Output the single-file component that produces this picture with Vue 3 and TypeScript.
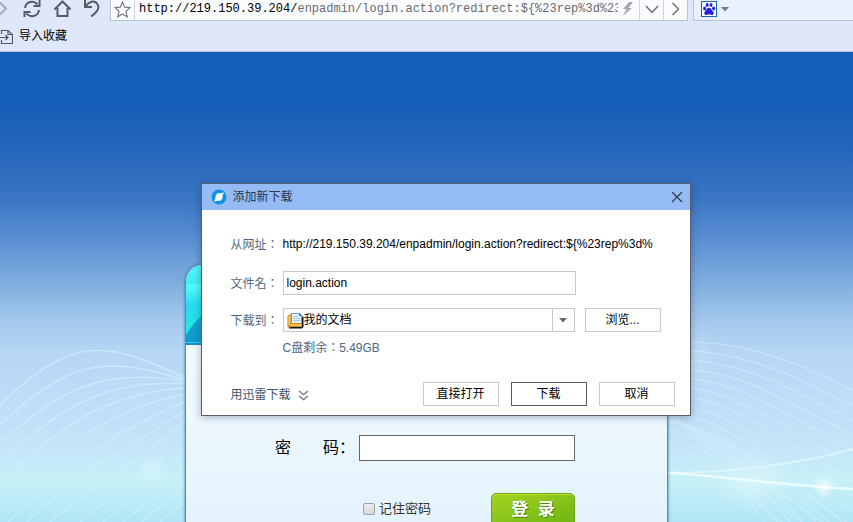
<script setup lang="ts">
import { ref } from 'vue'

const host = 'http://219.150.39.204/'
const path = 'enpadmin/login.action?redirect:${%23rep%3d%23c'
const source = 'http://219.150.39.204/enpadmin/login.action?redirect:${%23rep%3d%'
const fileName = ref('login.action')
const folder = ref('我的文档')
const password = ref('')
const remember = ref(false)

// Each entry: start point, two control points, and the height at the card edge
const leftWaves: number[][] = [
  [0, 405, 75, 332, 108, 342, 378],
  [0, 425, 75, 353, 112, 359, 380],
  [0, 444, 75, 372, 120, 373, 381],
  [0, 465, 72, 391, 120, 383, 383],
  [0, 484, 70, 414, 120, 392, 388],
  [0, 503, 70, 436, 125, 405, 394],
  [8, 522, 75, 456, 130, 425, 401],
  [27, 522, 85, 466, 140, 441, 410],
  [50, 522, 105, 475, 150, 455, 419],
  [80, 522, 125, 486, 158, 465, 432],
  [103, 522, 140, 492, 165, 476, 445],
  [123, 522, 152, 498, 170, 486, 460],
  [142, 522, 162, 504, 174, 496, 478],
  [160, 522, 172, 511, 180, 508, 500],
]
const leftPaths = leftWaves.map(([x, y, ax, ay, bx, by, ey]) => `M${x} ${y}C${ax} ${ay} ${bx} ${by} 186 ${ey}`)
const rightPaths = Array.from({ length: 13 }, (_, i) => {
  const y = 342 + i * 9
  return `M667 ${y}C${730 - i * 2} ${y - 3} ${785 - i * 4} ${y + 13 + i * 3} 853 ${y + 49 + i * 6}`
})
const fanPaths = Array.from({ length: 7 }, (_, i) => {
  return `M667 ${414 + i}C${698 + i * 4} ${430 + i} ${720 + i * 5} ${455 - i * 2} ${764 + i * 13} 522`
})
</script>

<template>
  <div class="page">
    <header class="chrome">
      <div class="toolbar">
        <nav class="nav">
          <button type="button" class="plain" aria-label="前进">
            <svg width="11" height="18" viewBox="0 0 11 18"><path d="M0 2.500L6 8.500L0 14.500" fill="none" stroke="#a3adb8" stroke-width="2" /></svg>
          </button>
          <button type="button" class="plain" aria-label="刷新">
            <svg width="18" height="18" viewBox="0 0 18 18"><g fill="none" stroke="#555b61" stroke-width="2"><path d="M2 8A7 7 0 0 1 14.500 4.500M16 10A7 7 0 0 1 3.500 13.500" /><path d="M16.500 0V6H10.500M1.500 17V12H7.500" /></g></svg>
          </button>
          <button type="button" class="plain" aria-label="主页">
            <svg width="18" height="18" viewBox="0 0 18 18"><path d="M1.500 9.500L9.500 1.500L17.500 9.500M4.500 8V16H14.500V8" fill="none" stroke="#555b61" stroke-width="2" /></svg>
          </button>
          <button type="button" class="plain" aria-label="撤销">
            <svg width="18" height="18" viewBox="0 0 18 18"><path d="M2 0V7H9M2.500 6.500C6 1.500 11 0 14 3.500C17.500 8 14 12 8 16.500" fill="none" stroke="#555b61" stroke-width="2" /></svg>
          </button>
        </nav>
        <div class="address">
          <button type="button" class="plain cell star" aria-label="收藏">
            <svg width="17" height="17" viewBox="0 0 17 17"><path d="M8.500 1L10.700 6.200L16 6.600L12 10.300L13.200 15.800L8.500 12.900L3.800 15.800L5 10.300L1 6.600L6.300 6.200Z" fill="#fff" stroke="#777d84" stroke-width="1.200" /></svg>
          </button>
          <div class="url"><span class="host">{{ host }}</span>{{ path }}</div>
          <svg class="bolt" width="12" height="14" viewBox="0 0 12 14"><path d="M7 0L1 7H4.500L1 14L10 6H6.500L11 0Z" fill="#a4a7aa" /></svg>
          <button type="button" class="plain cell" aria-label="历史">
            <svg width="14" height="9" viewBox="0 0 14 9"><path d="M1 1L7 7.500L13 1" fill="none" stroke="#666c72" stroke-width="1.300" /></svg>
          </button>
          <button type="button" class="plain cell" aria-label="转到">
            <svg width="9" height="14" viewBox="0 0 9 14"><path d="M1.500 1L7.500 7L1.500 13" fill="none" stroke="#666c72" stroke-width="1.400" /></svg>
          </button>
        </div>
        <div class="search">
          <button type="button" class="plain engine" aria-label="搜索引擎">
            <svg width="16" height="16" viewBox="0 0 16 16"><rect x=".5" y=".5" width="15" height="15" fill="#fff" stroke="#1666b4" /><g fill="#2722d8"><ellipse cx="3.600" cy="7.400" rx="1.500" ry="2" /><ellipse cx="6.200" cy="4" rx="1.500" ry="2" /><ellipse cx="10" cy="4" rx="1.500" ry="2" /><ellipse cx="12.600" cy="7.400" rx="1.500" ry="2" /><path d="M8 6.800C10 6.800 10.500 9 12 10.400C13.600 12 12.400 14.200 10.600 13.900C9 13.500 7 13.500 5.500 13.900C3.600 14.200 2.500 12 4 10.400C5.500 9 6 6.800 8 6.800Z" /></g></svg>
            <svg width="8" height="5" viewBox="0 0 8 5"><path d="M0 0H8L4 4.500Z" fill="#737980" /></svg>
          </button>
        </div>
      </div>
      <div class="bookmarks">
        <a href="#import" class="import">
          <svg width="13" height="15" viewBox="0 0 13 15"><path d="M1.500 5V1.500H8L12.500 5.500V14.500H1.500V11M8 1.500V5.500H12.500M0 8.500H8M5.500 6L8 8.500L5.500 11" fill="none" stroke="#4f575f" stroke-width="1.200" /></svg>
          <span>导入收藏</span>
        </a>
      </div>
    </header>

    <main class="stage">
      <svg class="art" viewBox="0 52 853 470" preserveAspectRatio="xMidYMin slice" aria-hidden="true">
        <defs>
          <radialGradient id="glow"><stop offset="0" stop-color="#fff" stop-opacity=".75" /><stop offset="1" stop-color="#fff" stop-opacity="0" /></radialGradient>
          <radialGradient id="haze"><stop offset="0" stop-color="#e2f9f8" stop-opacity=".5" /><stop offset="1" stop-color="#e2f9f8" stop-opacity="0" /></radialGradient>
        </defs>
        <g fill="none" stroke="#cdf1ff" stroke-width="1.400" opacity=".75">
          <path v-for="d in leftPaths" :key="d" :d="d" />
        </g>
        <g fill="none" stroke="#d6f0ff" stroke-width="1.400" opacity=".5">
          <path v-for="d in rightPaths" :key="d" :d="d" />
          <path v-for="d in fanPaths" :key="d" :d="d" />
        </g>
        <ellipse cx="152" cy="469" rx="18" ry="14" fill="url(#haze)" />
        <ellipse cx="695" cy="355" rx="20" ry="38" fill="url(#haze)" opacity=".4" />
        <ellipse cx="750" cy="482" rx="42" ry="30" fill="url(#haze)" />
        <path d="M667 473C730 473 800 464 853 449" fill="none" stroke="#eafcff" stroke-width="2" opacity=".6" />
        <path d="M667 472.500C730 477 790 486 853 489" fill="none" stroke="#f2feff" stroke-width="2.400" opacity=".8" />
        <circle cx="824" cy="487" r="12" fill="url(#glow)" />
      </svg>

      <section class="card">
        <svg class="banner" viewBox="0 0 481 81" preserveAspectRatio="none" aria-hidden="true">
          <defs>
            <linearGradient id="aqua" x1="0" y1="0" x2="0" y2="1"><stop offset="0" stop-color="#55f8fa" /><stop offset=".22" stop-color="#3eeff5" /><stop offset=".26" stop-color="#56fbf8" /><stop offset=".5" stop-color="#25dcf4" /><stop offset=".85" stop-color="#27e6de" /></linearGradient>
            <linearGradient id="deep" x1="0" y1="0" x2="0" y2="1"><stop offset="0" stop-color="#1ab3dd" /><stop offset="1" stop-color="#109acb" /></linearGradient>
          </defs>
          <rect width="481" height="81" fill="url(#aqua)" />
          <path d="M0 71Q7 59 16 51Q120 0 481 20V81H0Z" fill="url(#deep)" />
          <path d="M0 78.500H481" stroke="#2fcff2" />
          <path d="M0 80H481" stroke="#1790cb" stroke-width="2" />
        </svg>
        <form class="login" @submit.prevent>
          <label for="pwd" class="pwd-label">密　　码：</label>
          <input id="pwd" v-model="password" type="password" class="pwd" />
          <div class="actions">
            <label class="remember"><input v-model="remember" type="checkbox" />记住密码</label>
            <button type="submit" class="submit">登&nbsp; 录</button>
          </div>
        </form>
      </section>

      <div class="dialog" role="dialog" aria-labelledby="dlg-title">
        <div class="titlebar">
          <svg width="16" height="16" viewBox="0 0 16 16"><circle cx="8" cy="8" r="7.500" fill="#1092e2" /><path d="M12.800 3.200C12.300 4.500 12.400 5.200 11.600 6.200C12 8.200 11 10.800 9.200 11.800C7.500 12 6 11.300 3.200 12.800C3.800 11.500 3.700 10.800 4.400 9.800C4 7.800 5 5.200 6.800 4.200C8.500 4 10 4.700 12.800 3.200Z" fill="#fff" /></svg>
          <h1 id="dlg-title">添加新下载</h1>
          <button type="button" class="plain" aria-label="关闭">
            <svg width="12" height="12" viewBox="0 0 12 12"><path d="M1 1L11 11M11 1L1 11" fill="none" stroke="#2d3a4c" stroke-width="1.200" /></svg>
          </button>
        </div>
        <form class="fields" @submit.prevent>
          <div class="row first">
            <span class="name">从网址：</span>
            <span class="source">{{ source }}</span>
          </div>
          <div class="row second">
            <label for="file" class="name">文件名：</label>
            <input id="file" v-model="fileName" type="text" class="file" />
          </div>
          <div class="row">
            <label for="folder" class="name">下载到：</label>
            <div class="combo">
              <svg width="17" height="17" viewBox="0 0 17 17">
                <path d="M2 15H15V5L16.500 4V15L15 16.500H2Z" fill="#17130c" />
                <path d="M1 4L4 2.500V15H1Z" fill="#ffd65c" stroke="#b8811f" />
                <path d="M4.500 1.500H12L14.500 4V13H4.500Z" fill="#e5f1ff" stroke="#6e9bd3" />
                <path d="M12 .5L15.500 4H12Z" fill="#1e7fd0" />
                <path d="M6 4.500H11M6 6.500H13M6 8.500H13" stroke="#a7c8ec" />
                <path d="M1.500 14.500L4.500 11.500H14.500V14.500Z" fill="#fbc84e" stroke="#c48b27" />
              </svg>
              <select id="folder" v-model="folder">
                <option>我的文档</option>
              </select>
              <span class="arrow"><svg width="8" height="5" viewBox="0 0 8 5"><path d="M0 0H8L4 4.500Z" fill="#666" /></svg></span>
            </div>
            <button type="button" class="btn">浏览...</button>
          </div>
          <p class="space">C盘剩余：5.49GB</p>
          <div class="footer">
            <button type="button" class="plain xunlei">
              用迅雷下载
              <svg width="11" height="11" viewBox="0 0 11 11"><path d="M1 1L5.500 4.500L10 1M1 6L5.500 9.500L10 6" fill="none" stroke="#7d7d7d" stroke-width="1.400" /></svg>
            </button>
            <div class="buttons">
              <button type="button" class="btn">直接打开</button>
              <button type="submit" class="btn primary">下载</button>
              <button type="button" class="btn">取消</button>
            </div>
          </div>
        </form>
      </div>
    </main>
  </div>
</template>

<style>
body {
  margin: 0;
}
</style>

<style scoped>
.page,
.page * {
  box-sizing: border-box;
}
.page {
  display: flex;
  flex-direction: column;
  height: 100vh;
  overflow: hidden;
  font: 12px/16px "Liberation Sans", "Noto Sans CJK SC", sans-serif;
  color: #000;
}
button,
input,
select {
  font: inherit;
  color: inherit;
  margin: 0;
}
svg {
  display: block;
  flex: none;
}
.plain {
  border: 0;
  padding: 0;
  background: none;
}

.chrome {
  background: #dee8fa;
}
.toolbar {
  display: flex;
  height: 21px;
}
.nav {
  display: flex;
  gap: 12px;
  width: 110px;
  align-items: flex-start;
}
.address {
  display: flex;
  align-items: stretch;
  width: 578px;
  border: 1px solid #b9c5d5;
  border-top: 0;
  background: #fbfcff;
}
.cell {
  display: flex;
  align-items: center;
  justify-content: center;
  width: 24px;
  border-left: 1px solid #d0d5dc;
  padding-bottom: 2px;
}
.star {
  border-left: 0;
  border-right: 1px solid #d0d5dc;
}
.url {
  flex: 1;
  min-width: 0;
  margin: 0 4px;
  overflow: hidden;
  white-space: nowrap;
  font: 12px/18px "Liberation Mono", monospace;
  color: #6b6b6b;
}
.host {
  color: #000;
}
.bolt {
  margin: 2px 5px 0 0;
}
.search {
  flex: 1;
  margin-left: 5px;
  border: solid #b9c5d5;
  border-width: 0 0 1px 1px;
  background: #e9f1fd;
}
.engine {
  display: flex;
  align-items: center;
  gap: 4px;
  padding: 1px 0 0 7px;
}
.bookmarks {
  display: flex;
  align-items: center;
  height: 31px;
  border-bottom: 1px solid #b3c4da;
}
.import {
  display: flex;
  align-items: center;
  gap: 6px;
  color: #000;
  text-decoration: none;
}

.stage {
  position: relative;
  flex: 1;
  min-height: 0;
  overflow: hidden;
  background: linear-gradient(#155fb9 0, #155eb8 50px, #2566bb 98px, #3b76c4 148px, #6396d6 198px, #8ab7e1 244px, #a4c8ee 268px, #b6d6f4 300px, #bfddf7 348px, #c4e4f9 392px, #c7f0f7 428px, #b0e6f6 470px);
}
.art {
  position: absolute;
  inset: 0;
  width: 100%;
  height: 100%;
}
.card {
  position: relative;
  width: 483px;
  min-height: 100%;
  margin: 212px auto 0;
  border: 1px solid #5a8fb0;
  border-radius: 18px 18px 0 0;
  overflow: hidden;
  background: linear-gradient(#f4fbff 80px, #e4f3fd 250px);
  box-shadow: 0 0 3px #2c6f9c;
}
.banner {
  width: 100%;
  height: 80px;
}
.login {
  display: grid;
  grid-template-columns: 84px 216px;
  row-gap: 32px;
  padding: 90px 0 0 89px;
}
.pwd-label {
  font-size: 16px;
  line-height: 26px;
  white-space: nowrap;
}
.pwd {
  height: 26px;
  border: 1px solid #666;
  padding: 0 4px;
  background: #fff;
}
.actions {
  grid-column: 2;
  display: flex;
  justify-content: space-between;
  align-items: flex-start;
  padding-left: 4px;
}
.remember {
  display: flex;
  align-items: center;
  gap: 4px;
  height: 32px;
  font-size: 13px;
  color: #333;
}
.remember input {
  appearance: none;
  width: 12px;
  height: 12px;
  border: 1px solid #a2a2a2;
  border-radius: 2px;
  background: linear-gradient(#ececec, #d8d8d8);
}
.submit {
  width: 84px;
  height: 34px;
  border: 1px solid #6fa51c;
  border-radius: 5px;
  padding: 0;
  background: linear-gradient(160deg, #a4d321, #6bb511);
  box-shadow: inset 0 1px #bfe526;
  color: #fff;
  font-size: 17px;
  font-weight: 700;
  text-shadow: 1px 1px #4a830f;
}

.dialog {
  position: absolute;
  top: 131px;
  left: calc(50% - 226px);
  width: 490px;
  border: 1px solid #555d6e;
  background: #fff;
  box-shadow: 0 1px 8px rgba(20, 40, 70, 0.35);
}
.titlebar {
  display: flex;
  align-items: center;
  gap: 6px;
  height: 26px;
  padding: 0 7px 0 9px;
  background: #94bbf4;
}
.titlebar h1 {
  flex: 1;
  margin: 0;
  font-size: 12px;
  font-weight: 400;
  color: #2b3648;
}
.fields {
  display: flex;
  flex-direction: column;
  padding: 22px 15px 9px 29px;
}
.row {
  display: flex;
  align-items: center;
  height: 24px;
}
.first {
  margin-bottom: 15px;
}
.second {
  margin-bottom: 13px;
}
.name,
.space {
  font-family: "Liberation Sans", "Noto Sans CJK TC", sans-serif;
  color: #50677f;
}
.name {
  width: 52px;
  padding-top: 2px;
}
.source {
  width: 377px;
  overflow: hidden;
  white-space: nowrap;
}
.file {
  width: 293px;
  height: 24px;
  border: 1px solid #c8c8c8;
  padding: 0 3px;
}
.combo {
  display: flex;
  align-items: center;
  width: 292px;
  height: 24px;
  margin-right: 10px;
  border: 1px solid #c8c8c8;
  padding-left: 3px;
}
.combo select {
  flex: 1;
  appearance: none;
  border: 0;
  padding: 0;
  background: none;
}
.arrow {
  display: flex;
  align-items: center;
  justify-content: center;
  width: 22px;
  height: 22px;
  border-left: 1px solid #c8c8c8;
}
.btn {
  width: 76px;
  height: 24px;
  border: 1px solid #c8c8c8;
  padding: 0;
  background: #fff;
}
.primary {
  border-color: #5c5c5c;
}
.space {
  margin: 4px 0 22px 52px;
  line-height: 24px;
}
.footer {
  display: flex;
  justify-content: space-between;
  align-items: center;
}
.xunlei {
  display: flex;
  align-items: center;
  gap: 7px;
  padding-top: 2px;
  color: #41526e;
}
.buttons {
  display: flex;
  gap: 12px;
}
</style>
